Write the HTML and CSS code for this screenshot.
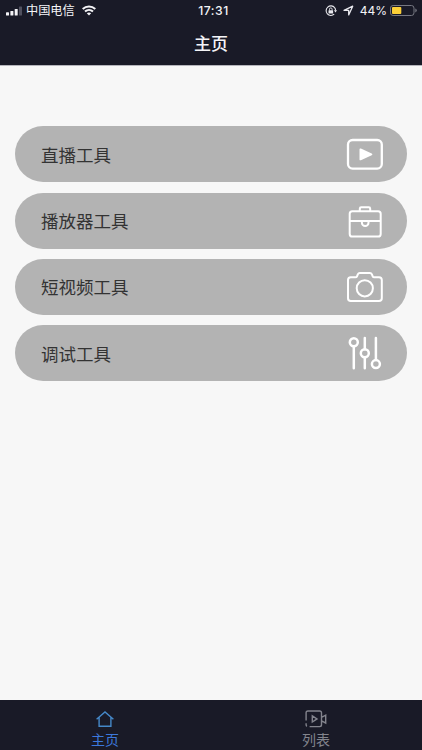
FILE: index.html
```html
<!DOCTYPE html>
<html lang="zh-CN">

<head>
    <meta charset="utf-8" />
    <meta name="viewport" content="width=device-width, initial-scale=1" />
    <title>主页</title>
    <link rel="stylesheet" href="styles.css">
</head>

<body>
    <div class="page">
        <!--顶部-->
        <header class="header">
            <div class="status">
                <div class="status-left">
                    <svg class="signal" width="17" height="10" viewBox="0 0 17 10">
                        <rect x="0" y="6.3" width="3" height="3.2" rx="0.6" fill="#f4f4f7" />
                        <rect x="4.4" y="4.9" width="3" height="4.6" rx="0.6" fill="#f4f4f7" />
                        <rect x="8.7" y="2.9" width="3" height="6.6" rx="0.6" fill="#f4f4f7" />
                        <rect x="13" y="0.5" width="3" height="9" rx="0.6" fill="#50515f" />
                    </svg>
                    <span class="carrier">中国电信</span>
                    <svg class="wifi" width="14" height="11" viewBox="0 0 14 11">
                        <path d="M0.7 4.1C4.3 0.7 9.7 0.7 13.3 4.1M3 6.6C5.3 4.5 8.7 4.5 11 6.6" fill="none" stroke="#f4f4f7" stroke-width="2" />
                        <path d="M7 10.5L4.8 8.3Q7 6.6 9.2 8.3Z" fill="#f4f4f7" />
                    </svg>
                </div>
                <div class="time">17:31</div>
                <div class="status-right">
                    <svg class="lock" width="12" height="12" viewBox="0 0 12 12">
                        <path d="M9.6 2.6A4.8 4.8 0 1 0 9.2 9.2" fill="none" stroke="#e9e9ee" stroke-width="1.1" />
                        <path d="M8.9 5.2h3.1l-1.5 2.3z" fill="#e9e9ee" />
                        <path d="M9.4 2.4A4.8 4.8 0 0 1 10.6 5.4" fill="none" stroke="#e9e9ee" stroke-width="1.1" />
                        <rect x="3.5" y="5.2" width="4.6" height="3.4" rx="0.5" fill="#e9e9ee" />
                        <path d="M4.5 5.4V4.2a1.3 1.3 0 0 1 2.6 0v1.2" fill="none" stroke="#e9e9ee" stroke-width="0.9" />
                    </svg>
                    <svg class="location" width="11" height="11" viewBox="0 0 11 11">
                        <path d="M1 5.3L9.7 1.2L5.7 9.9V5.3Z" fill="none" stroke="#e9e9ee" stroke-width="1.3" stroke-linejoin="round" />
                    </svg>
                    <span class="percent">44%</span>
                    <svg class="battery" width="28" height="11" viewBox="0 0 28 11">
                        <rect x="0.5" y="0.5" width="23.5" height="10" rx="2.6" fill="none" stroke="#777882" />
                        <rect x="2" y="2" width="9.3" height="7" rx="1" fill="#fdd037" />
                        <path d="M25.3 3.6Q26.8 4.3 26.8 5.5T25.3 7.4Z" fill="#777882" />
                    </svg>
                </div>
            </div>
            <h1 class="title">主页</h1>
        </header>

        <!--工具列表-->
        <main class="menu">
            <a class="item">
                <span>直播工具</span>
                <svg class="icon" viewBox="0 0 40 40">
                    <rect x="3" y="6" width="33.8" height="28.6" rx="4.6" stroke-width="2.3" />
                    <path class="solid" d="M14.5 15.4v10q0 1.3 1.4.8l10.8-5q1.6-.8 0-1.6l-10.8-5q-1.4-.5-1.4.8z" />
                </svg>
            </a>
            <a class="item">
                <span>播放器工具</span>
                <svg class="icon" viewBox="0 0 40 40">
                    <rect x="4.7" y="10.2" width="31" height="25.3" rx="2.6" />
                    <path d="M14.8 10.2V7.7q0-1.4 1.4-1.4h7.6q1.4 0 1.4 1.4v2.5M4.7 19.9h12.3M23.4 19.9h12.3" />
                    <path d="M16.9 19.9v1.9a3.3 3.3 0 0 0 6.6 0v-1.9z" />
                </svg>
            </a>
            <a class="item">
                <span>短视频工具</span>
                <svg class="icon" viewBox="0 0 40 40">
                    <path d="M5.8 10.3h4.7q1.1 0 1.5-1l.8-2q.6-1.4 2-1.4h10.1q1.4 0 2 1.4l.8 2q.4 1 1.5 1h4.8q2.8 0 2.8 2.8v18.2q0 2.8-2.8 2.8H5.8Q3 34.1 3 31.3V13.1q0-2.8 2.8-2.8z" />
                    <circle cx="19.8" cy="21.3" r="8.1" />
                </svg>
            </a>
            <a class="item">
                <span>调试工具</span>
                <svg class="icon" viewBox="0 0 40 40">
                    <g stroke-width="2.5" stroke-linecap="round">
                        <circle cx="8.8" cy="9.2" r="4" />
                        <circle cx="19.8" cy="20.2" r="4" />
                        <circle cx="30.9" cy="31.1" r="4" />
                        <path d="M8.8 13.2v22M19.8 5v11.2M19.8 24.2v11M30.9 5v22.1" />
                    </g>
                </svg>
            </a>
        </main>

        <!--底部导航-->
        <nav class="tabbar">
            <a class="tab active">
                <svg class="tab-icon" viewBox="0 0 22 18">
                    <path d="M2.6 9.3L11 1.9L19.4 9.3M5.1 7.4V16.2H16.9V7.4" />
                </svg>
                <span>主页</span>
            </a>
            <a class="tab">
                <svg class="tab-icon" viewBox="0 0 22 18">
                    <path d="M4.6 16.6H14.7q1.8 0 1.8-1.8V2.8q0-1.8-1.8-1.8H2.9Q1.1 1 1.1 2.8V10.6M1.1 13.2V14.8q0 1.1.8 1.6M16.5 7.3L20.7 5.2V13L16.5 10.9M7.3 5.8V12L12 8.9Z" />
                </svg>
                <span>列表</span>
            </a>
        </nav>
    </div>
</body>

</html>
```

FILE: styles.css
```css
* {
    padding: 0;
    margin: 0;
    box-sizing: border-box;
}

body {
    font-family: "Liberation Sans", "Noto Sans CJK SC", sans-serif;
    background-color: #f7f7f7;
}

.page {
    height: 100vh;
    display: flex;
    flex-direction: column;
}

/* 顶部 */
.header {
    height: 66px;
    border-bottom: 1px solid #b5b5bc;
    background-color: #191a27;
    color: #f4f4f7;
}

.status {
    height: 21px;
    padding: 0 4px 0 6px;
    display: grid;
    grid-template-columns: 1fr auto 1fr;
    align-items: center;
}

.status-left,
.status-right {
    display: flex;
    align-items: center;
}

.status-right {
    justify-content: flex-end;
}

.carrier {
    margin: 0 7px 0 3px;
    padding-top: 1px;
    font-size: 12.2px;
    line-height: 20px;
}

.time {
    font-family: Inter, sans-serif;
    font-size: 12.2px;
    font-weight: 500;
    letter-spacing: 0.5px;
    padding-left: 3px;
}

.location {
    margin: 0 6px;
}

.percent {
    margin-right: 3px;
    font-family: Inter, sans-serif;
    font-size: 12px;
}

.title {
    padding-top: 2px;
    font-size: 17px;
    font-weight: 500;
    line-height: 44px;
    text-align: center;
}

/* 工具列表 */
.menu {
    flex: 1;
    padding: 60.3px 15.5px 0 15px;
    display: flex;
    flex-direction: column;
    gap: 10.25px;
}

.item {
    height: 56px;
    padding: 0 21.5px 0 26px;
    display: flex;
    justify-content: space-between;
    align-items: center;
    border-radius: 28px;
    background-color: #b3b3b3;
    color: #333333;
    font-size: 17.5px;
}

.icon {
    width: 40px;
    height: 40px;
    fill: none;
    stroke: #ffffff;
    stroke-width: 2;
    stroke-linejoin: round;
}

.icon .solid {
    fill: #ffffff;
    stroke: none;
}

/* 底部导航 */
.tabbar {
    height: 50px;
    display: flex;
    background-color: #191a27;
}

.tab {
    flex: 1;
    padding: 10px 1px 0 0;
    display: flex;
    flex-direction: column;
    align-items: center;
    color: #83848d;
    font-size: 14px;
    line-height: 24px;
}

.tab-icon {
    width: 22px;
    height: 18px;
    flex-shrink: 0;
    fill: none;
    stroke: #83848d;
    stroke-width: 1.4;
}

.active {
    color: #3c78dc;
}

.active .tab-icon {
    stroke: #4588c8;
}
```
